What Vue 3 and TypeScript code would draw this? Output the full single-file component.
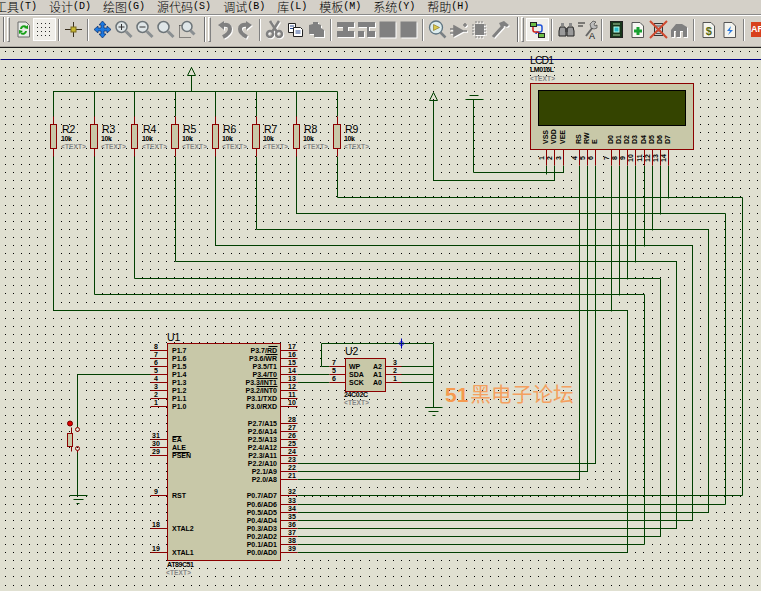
<script setup lang="ts">
interface Label { x: number; y: number; t: string; c: string; a?: string; r?: boolean; w?: number }

const menus = [
  ['工具', '(T)'], ['设计', '(D)'], ['绘图', '(G)'], ['源代码', '(S)'], ['调试', '(B)'],
  ['库', '(L)'], ['模板', '(M)'], ['系统', '(Y)'], ['帮助', '(H)'],
]

function dotPath(): string {
  let d = ''
  for (let k = 0; k <= 66; k++) {
    const y = Math.floor(51.4 + 8.085 * k)
    for (let i = 0; i <= 93; i++) {
      const x = Math.floor(5.2 + 8.085 * i)
      d += `M${x} ${y}h1v1h-1z`
    }
  }
  return d
}
const dots = dotPath()

const res = [
  { x: 53, bx: 50, w: 6, n: 'R2', lx: 62, row: 310, end: 627, to: 552 },
  { x: 94, bx: 90, w: 7, n: 'R3', lx: 102, row: 294, end: 644, to: 544 },
  { x: 134, bx: 131, w: 6, n: 'R4', lx: 143, row: 278, end: 660, to: 536 },
  { x: 175, bx: 171, w: 7, n: 'R5', lx: 183, row: 261, end: 676, to: 528 },
  { x: 215, bx: 212, w: 6, n: 'R6', lx: 223, row: 245, end: 692, to: 520 },
  { x: 256, bx: 252, w: 7, n: 'R7', lx: 264, row: 229, end: 708, to: 512 },
  { x: 296, bx: 293, w: 6, n: 'R8', lx: 304, row: 213, end: 725, to: 504 },
  { x: 337, bx: 333, w: 7, n: 'R9', lx: 345, row: 197, end: 742, to: 495 },
]

const lcdPins = [
  { x: 546, l: 'VSS', e: 174 }, { x: 554, l: 'VDD', e: 180 }, { x: 563, l: 'VEE', e: 172 },
  { x: 579, l: 'RS', e: 479 }, { x: 587, l: 'RW', e: 471 }, { x: 595, l: 'E', e: 463 },
  { x: 611, l: 'D0', e: 311 }, { x: 619, l: 'D1', e: 295 }, { x: 627, l: 'D2', e: 279 },
  { x: 635, l: 'D3', e: 262 }, { x: 644, l: 'D4', e: 246 }, { x: 652, l: 'D5', e: 230 },
  { x: 660, l: 'D6', e: 214 }, { x: 668, l: 'D7', e: 198 },
]

let wire = 'M53 91H337M191 91V75M563 172H473V99M554 180H433V100'
wire += 'M77 374H150M77 374V427M77 451V495M321 366H329M321 366V343H433V407M401 366H433M401 374H433M401 382H433M297 374H329M297 382H329'
for (const r of res) wire += `M${r.x} 91V116M${r.x} 156V${r.row}H${r.end}V${r.to}H297`
for (const p of lcdPins) wire += `M${p.x} 165V${p.e}`
wire += 'M579 479H297M587 471H297M595 463H297'

let redPins = ''
for (const r of res) redPins += `M${r.x} 116V124M${r.x} 148V156`
for (const p of lcdPins) redPins += `M${p.x} 149V165`

const labels: Label[] = []
res.forEach((r) => {
  labels.push({ x: r.lx, y: 133, t: r.n, c: 'ttl' })
  labels.push({ x: r.lx - 1, y: 141, t: '10k', c: 'pin', w: 11 })
  labels.push({ x: r.lx - 1, y: 149, t: '<TEXT>', c: 'grey', w: 25 })
})
lcdPins.forEach((p, i) => {
  labels.push({ x: p.x + 2, y: 144, t: p.l, c: 'pin', r: true })
  labels.push({ x: p.x - 2, y: 158, t: String(i + 1), c: 'pin', a: 'middle', r: true })
})
labels.push({ x: 530, y: 64, t: 'LCD1', c: 'ttl', w: 24 })
labels.push({ x: 530, y: 72, t: 'LM016L', c: 'pin', w: 24 })
labels.push({ x: 530, y: 81, t: '<TEXT>', c: 'grey', w: 25 })
labels.push({ x: 167, y: 341, t: 'U1', c: 'ttl' })
labels.push({ x: 167, y: 567, t: 'AT89C51', c: 'pin', w: 27 })
labels.push({ x: 166, y: 575, t: '<TEXT>', c: 'grey', w: 25 })
labels.push({ x: 345, y: 355, t: 'U2', c: 'ttl' })
labels.push({ x: 344, y: 397, t: '24C02C', c: 'pin', w: 24 })
labels.push({ x: 344, y: 405, t: '<TEXT>', c: 'grey', w: 25 })

const p1 = ['P1.7', 'P1.6', 'P1.5', 'P1.4', 'P1.3', 'P1.2', 'P1.1', 'P1.0']
const leftPins: [string, string, number][] = [
  ...p1.map((l, i): [string, string, number] => [l, String(8 - i), 350 + i * 8]),
  ['EA', '31', 439], ['ALE', '30', 447], ['PSEN', '29', 455], ['RST', '9', 495],
  ['XTAL2', '18', 528], ['XTAL1', '19', 552],
]
const ys0 = [495, 504, 512, 520, 528, 536, 544, 552]
const p3 = ['P3.7/RD', 'P3.6/WR', 'P3.5/T1', 'P3.4/T0', 'P3.3/INT1', 'P3.2/INT0', 'P3.1/TXD', 'P3.0/RXD']
const p2 = ['P2.7/A15', 'P2.6/A14', 'P2.5/A13', 'P2.4/A12', 'P2.3/A11', 'P2.2/A10', 'P2.1/A9', 'P2.0/A8']
const p0 = ['P0.7/AD7', 'P0.6/AD6', 'P0.5/AD5', 'P0.4/AD4', 'P0.3/AD3', 'P0.2/AD2', 'P0.1/AD1', 'P0.0/AD0']
const rightPins: [string, string, number][] = [
  ...p3.map((l, i): [string, string, number] => [l, String(17 - i), 350 + i * 8]),
  ...p2.map((l, i): [string, string, number] => [l, String(28 - i), 423 + i * 8]),
  ...p0.map((l, i): [string, string, number] => [l, String(32 + i), ys0[i]]),
]
for (const [l, n, y] of leftPins) {
  redPins += `M150 ${y}H167`
  labels.push({ x: 172, y: y + 2.5, t: l, c: 'pin' })
  labels.push({ x: 156, y: y - 1.5, t: n, c: 'pin', a: 'middle' })
}
for (const [l, n, y] of rightPins) {
  redPins += `M280 ${y}H297`
  labels.push({ x: 277, y: y + 2.5, t: l, c: 'pin', a: 'end' })
  labels.push({ x: 292, y: y - 1.5, t: n, c: 'pin', a: 'middle' })
}
const u2 = [
  { l: 'WP', n: '7', r: 'A2', m: '3', y: 366 },
  { l: 'SDA', n: '5', r: 'A1', m: '2', y: 374 },
  { l: 'SCK', n: '6', r: 'A0', m: '1', y: 382 },
]
for (const p of u2) {
  redPins += `M329 ${p.y}H345M385 ${p.y}H401`
  labels.push({ x: 349, y: p.y + 2.5, t: p.l, c: 'pin' })
  labels.push({ x: 382, y: p.y + 2.5, t: p.r, c: 'pin', a: 'end' })
  labels.push({ x: 334, y: p.y - 1.5, t: p.n, c: 'pin', a: 'middle' })
  labels.push({ x: 395, y: p.y - 1.5, t: p.m, c: 'pin', a: 'middle' })
}
const overbars = 'M268 346H277M265 354H277M256 378H277M256 386H277M172 436H181M172 452H189'
</script>

<template>
  <div class="app">
    <div class="menu">
      <span v-for="m in menus" :key="m[0]" class="mi"><span class="cjk">{{ m[0] }}</span><span class="key">{{ m[1] }}</span></span>
    </div>
    <div class="bar">
      <div class="grip g1"><i></i><b></b></div>
      <div class="cell"><svg viewBox="0 0 21 21"><path d="M5 3h8l3.500 3.500V18H5z" fill="#e9ece8" stroke="#6a6a6a"/><path d="M8 10a3 3 0 0 1 5-2M13 12a3 3 0 0 1-5 2" stroke="#18a018" stroke-width="2" fill="none"/><path d="M11 9l4-3v4zM10 12l-4 3v-4z" fill="#18a018"/></svg></div>
      <div class="cell on"><svg viewBox="0 0 21 21"><path d="M3 4.500H18M3 8.500H18M3 12.500H18M3 16.500H18" stroke="#2c2c2c" stroke-dasharray="1 3"/></svg></div>
      <div class="sep"></div>
      <div class="cell"><svg viewBox="0 0 21 21"><path d="M2 10.500H19M10.500 3V18" stroke="#3a3020"/><rect x="8" y="8" width="5" height="5" fill="#c8b830" stroke="#7a6a20"/></svg></div>
      <div class="sep"></div>
      <div class="cell"><svg viewBox="0 0 21 21"><path d="M10.500 2l3.500 4h-2v3h3V7l4 3.500-4 3.500v-2h-3v3h2l-3.500 4-3.500-4h2v-3H6v2l-4-3.500L6 7v2h3V6H7z" fill="#1c78e0" stroke="#0b2c66" stroke-width=".7"/></svg></div>
      <div class="cell"><svg viewBox="0 0 21 21"><circle cx="8.500" cy="8" r="5.500" fill="#dfe6e8" stroke="#6c7478" stroke-width="1.500"/><path d="M13 12.500l5.500 5.500" stroke="#8a8f92" stroke-width="3"/><path d="M5.500 8h6M8.500 5v6" stroke="#333"/></svg></div>
      <div class="cell"><svg viewBox="0 0 21 21"><circle cx="8.500" cy="8" r="5.500" fill="#dfe6e8" stroke="#6c7478" stroke-width="1.500"/><path d="M13 12.500l5.500 5.500" stroke="#8a8f92" stroke-width="3"/><path d="M5.500 8h6" stroke="#333"/></svg></div>
      <div class="cell"><svg viewBox="0 0 21 21"><circle cx="8.500" cy="8" r="5.500" fill="#dfe6e8" stroke="#6c7478" stroke-width="1.500"/><path d="M13 12.500l5.500 5.500" stroke="#8a8f92" stroke-width="3"/></svg></div>
      <div class="cell"><svg viewBox="0 0 21 21"><path d="M3.500 6.500V18.500H15" fill="none" stroke="#333" stroke-dasharray="1 1"/><path d="M3.500 6.500H7" stroke="#333" stroke-dasharray="1 1"/><circle cx="11" cy="7.500" r="5" fill="#dfe6e8" stroke="#6c7478" stroke-width="1.500"/><path d="M14.500 11.500l4 4" stroke="#8a8f92" stroke-width="3"/></svg></div>
      <div class="grip g2"><i></i><b></b></div>
      <div class="cell dim"><svg viewBox="0 0 21 21"><path d="M8 6c6-1 8 1 8 4s-3 6-7 8" stroke="#808080" stroke-width="4" fill="none"/><path d="M4 6l6-4v9z" fill="#808080"/></svg></div>
      <div class="cell dim"><svg viewBox="0 0 21 21"><path d="M13 6C7 5 5 7 5 10s3 6 7 8" stroke="#808080" stroke-width="4" fill="none"/><path d="M17 6l-6-4v9z" fill="#808080"/></svg></div>
      <div class="sep"></div>
      <div class="cell dim"><svg viewBox="0 0 21 21"><path d="M6 2l7 11M15 2L8 13" stroke="#808080" stroke-width="2.500"/><circle cx="6" cy="15" r="3" fill="none" stroke="#808080" stroke-width="2.500"/><circle cx="15" cy="15" r="3" fill="none" stroke="#808080" stroke-width="2.500"/></svg></div>
      <div class="cell"><svg viewBox="0 0 21 21"><path d="M3.500 4.500h7v9h-7z" fill="#fff" stroke="#222"/><path d="M8.500 8.500h7l2 2v7h-9z" fill="#fff" stroke="#222"/><path d="M5 7h4M5 9.500h3M10.500 12h5M10.500 14h5" stroke="#2a4a90"/></svg></div>
      <div class="cell dim"><svg viewBox="0 0 21 21"><path d="M3 6l4-1V3h5v2l3 1v3l3 2v7H8v-3H3z" fill="#808080"/></svg></div>
      <div class="sep"></div>
      <div class="cell dim"><svg viewBox="0 0 21 21"><path d="M2 3h17v5h-6v4h6v6H2v-6h6V8H2z" fill="#808080"/></svg></div>
      <div class="cell dim"><svg viewBox="0 0 21 21"><path d="M2 3h17v5h-6v4h6v6h-8V8H2z" fill="#808080"/><path d="M2 12h6v6H2z" fill="#808080"/></svg></div>
      <div class="cell dim"><svg viewBox="0 0 21 21"><rect x="2.500" y="2.500" width="16" height="16" fill="#808080"/></svg></div>
      <div class="cell dim"><svg viewBox="0 0 21 21"><rect x="2.500" y="2.500" width="16" height="16" fill="#808080"/></svg></div>
      <div class="sep"></div>
      <div class="cell"><svg viewBox="0 0 21 21"><circle cx="9" cy="8.500" r="6.500" fill="#dcecee" stroke="#5d7380" stroke-width="1.300"/><path d="M6.500 5.500l6 3-6 3z" fill="#d8c84c" stroke="#806a20" stroke-width=".6"/><path d="M13.500 13.500l5 5" stroke="#7a8084" stroke-width="2.500"/></svg></div>
      <div class="cell dim"><svg viewBox="0 0 21 21"><path d="M6 7l9 5-9 5zM2 10h4M2 14h4M15 12h4M15 6h4M17 4v4" stroke="#808080" stroke-width="1.600" fill="#808080"/></svg></div>
      <div class="cell dim"><svg viewBox="0 0 21 21"><path d="M6 5h9v11H6z" fill="#808080"/><path d="M3 6h15M3 9h15M3 12h15M3 15h15M7 2v17M10 2v17M13 2v17" stroke="#808080" stroke-dasharray="2 1"/></svg></div>
      <div class="cell dim"><svg viewBox="0 0 21 21"><path d="M3 18L13 7" stroke="#808080" stroke-width="3"/><path d="M9 4l5-2 5 4-2 2-3-1-2 3z" fill="#808080"/></svg></div>
      <div class="grip g3"><i></i><b></b></div>
      <div class="cell on"><svg viewBox="0 0 21 21"><path d="M9 6h4a2 2 0 0 1 2 2v3a2 2 0 0 1-2 2h-2a2 2 0 0 0-2 2" fill="none" stroke="#1c50d8" stroke-width="1.500"/><path d="M6 8v3a2 2 0 0 0 2 2h2a2 2 0 0 1 2 2" fill="none" stroke="#d02018" stroke-width="1.500"/><rect x="3.500" y="3.500" width="6" height="4" fill="#6cbe46" stroke="#222"/><rect x="11.500" y="14.500" width="6" height="4" fill="#6cbe46" stroke="#222"/></svg></div>
      <div class="sep"></div>
      <div class="cell"><svg viewBox="0 0 21 21"><path d="M5 4h3v3H5zM13 4h3v3h-3z" fill="#8a8a8a"/><path d="M4 8h5l1 4v5H3v-5zM12 8h5l1 4v5h-7v-5z" fill="#9a9a9a" stroke="#222"/><path d="M9 9h3v4H9z" fill="#444"/></svg></div>
      <div class="cell"><svg viewBox="0 0 21 21"><path d="M1 4h7M1 7h5" stroke="#222"/><path d="M9 17L16 8" stroke="#666" stroke-width="2"/><path d="M13 5l3-3 3 1-2 2 1 2 2-1v3l-3 1-3-1z" fill="#bbb" stroke="#333" stroke-width=".6"/><text x="12" y="20" class="ta">A</text></svg></div>
      <div class="sep"></div>
      <div class="cell"><svg viewBox="0 0 21 21"><rect x="4.500" y="2.500" width="12" height="16" fill="#18361c" stroke="#222"/><path d="M7 5h7M7 16h7" stroke="#a8d0a0"/><rect x="8" y="8" width="5" height="5" fill="#2ab8c8" stroke="#bfe"/></svg></div>
      <div class="cell"><svg viewBox="0 0 21 21"><path d="M5 3.500h8l3.500 3.500v11.500H5z" fill="#f7f7f3" stroke="#555"/><path d="M7 12h8M11 8v8" stroke="#18a030" stroke-width="3"/></svg></div>
      <div class="cell"><svg viewBox="0 0 21 21"><rect x="6.500" y="4.500" width="8" height="12" fill="#ccc" stroke="#333"/><path d="M8 7h5M8 9.500h5M8 12h5M8 14.500h5" stroke="#555"/><path d="M2 2l17 17M19 2L2 19" stroke="#d04a30" stroke-width="2"/></svg></div>
      <div class="cell dim"><svg viewBox="0 0 21 21"><path d="M2 18v-7l5-6h6l5 3v10h-4v-6h-3v6H7v-6H5v6z" fill="#808080"/></svg></div>
      <div class="sep"></div>
      <div class="cell"><svg viewBox="0 0 21 21"><path d="M5 3.500h8l3.500 3.500v11.500H5z" fill="#f4f4ee" stroke="#555"/><text x="10.800" y="15.500" text-anchor="middle" class="ts dollar">$</text></svg></div>
      <div class="cell"><svg viewBox="0 0 21 21"><path d="M5 3.500h8l3.500 3.500v11.500H5z" fill="#f4f4ee" stroke="#555"/><path d="M12 7l-4 5h3l-2 4 5-5h-3z" fill="#2878e0"/></svg></div>
      <div class="sep"></div>
      <div class="cell ares"><span>ARE</span></div>
    </div>
    <svg class="sheet" viewBox="0 48 761 543" width="761" height="543">
      <path :d="dots" fill="#000" />
      <g transform="translate(.5 .5)" fill="none" stroke-width="1">
        <path d="M0 59H761" stroke="#000080" />
        <path :d="wire" stroke="#004000" />
        <path :d="redPins" stroke="#8b0000" />
        <path d="M191 67l-4 8h8z" stroke="#004000" />
        <path d="M433 92l-4 8h8z" stroke="#004000" />
        <path d="M465 99H483M469 95H478" stroke="#004000" />
        <path d="M425 407H442M428 411H438M432 415H435" stroke="#004000" />
        <path d="M69 495H87M73 499H83M76 503H79" stroke="#004000" />
        <rect v-for="r in res" :key="r.n" :x="r.bx" y="124" :width="r.w" height="24" fill="#c8c8a8" stroke="#8b0000" />
        <rect x="530" y="83" width="163" height="66" fill="#c8c8a8" stroke="#8b0000" />
        <rect x="538" y="90" width="147" height="35" fill="#344400" stroke="#000" />
        <rect x="167" y="343" width="113" height="217" fill="#c8c8a8" stroke="#8b0000" />
        <rect x="345" y="358" width="40" height="33" fill="#c8c8a8" stroke="#8b0000" />
        <path :d="overbars" stroke="#000" />
        <circle cx="77" cy="429" r="2" stroke="#8b0000" />
        <circle cx="77" cy="448" r="2" stroke="#8b0000" />
        <path d="M71 427V451M77 450V452" stroke="#8b0000" />
        <rect x="67" y="433" width="5" height="13" fill="#c8c8a8" stroke="#8b0000" />
        <circle cx="69.500" cy="423" r="2.500" fill="#e00000" stroke="#700000" />
        <path d="M401 338V348M401 340.500l2.500 2.500-2.500 2.500-2.500-2.500z" stroke="#0000c0" />
      </g>
      <template v-for="(l, i) in labels" :key="i">
        <text
          :x="l.x"
          :y="l.y"
          :class="l.c"
          :text-anchor="l.a || 'start'"
          :textLength="l.w"
          :transform="l.r ? `rotate(-90 ${l.x} ${l.y})` : undefined"
        >{{ l.t }}</text>
      </template>
      <text x="445" y="402" class="wm"><tspan class="wm51">51</tspan><tspan dx="2">黑电子论坛</tspan></text>
    </svg>
  </div>
</template>

<style scoped>
.app {
  width: 761px;
  height: 591px;
  overflow: hidden;
  background: #d4d0c8;
  display: flex;
  flex-direction: column;
}
.menu {
  height: 14px;
  flex: none;
  display: flex;
  gap: 12px;
  margin-left: -5px;
  border-bottom: 1px solid #8a8a8a;
  box-shadow: 0 1px 0 #fff;
  line-height: 13px;
  color: #000;
  white-space: nowrap;
}
.mi { display: flex; }
.cjk { font: 300 12px/13px "Noto Sans CJK SC", sans-serif; }
.key { font: 10px/13px "Liberation Mono", monospace; }
.bar {
  height: 31px;
  margin-top: 1px;
  flex: none;
  display: flex;
  align-items: center;
  padding-bottom: 3px;
  box-sizing: border-box;
  border-bottom: 1px solid #b0aca4;
}
.cell {
  width: 21px;
  height: 21px;
  flex: none;
}
.cell svg { display: block; width: 21px; height: 21px; }
.cell.on {
  background: #f0eee9;
  box-shadow: 0 0 0 1px #fff;
}
.dim svg { filter: drop-shadow(1px 1px 0 #fff); }
.sep { width: 8px; height: 22px; flex: none; position: relative; }
.sep::before {
  content: "";
  display: block;
  width: 1px;
  height: 22px;
  margin-left: 3px;
  background: #808080;
  box-shadow: 1px 0 0 #fff;
}
.grip { display: flex; flex: none; height: 25px; }
.grip i { width: 1px; background: #707070; box-shadow: 1px 0 0 #fff; }
.grip b { width: 1px; margin-left: 3px; border: 1px solid #808080; border-left-color: #fff; border-top-color: #fff; }
.g1 { width: 13px; padding-left: 3px; box-sizing: border-box; }
.g2 { width: 17px; padding-left: 7px; box-sizing: border-box; }
.g3 { width: 16px; padding-left: 6px; box-sizing: border-box; }
.ares span {
  display: block;
  margin-left: 3px;
  width: 20px;
  height: 15px;
  margin-top: 3px;
  background: #d8401c;
  color: #fff;
  font: bold 9px/15px "Liberation Sans", sans-serif;
}
.ta { font: 9px "Liberation Sans", sans-serif; fill: #111; }
.ts { font: bold 11px "Liberation Sans", sans-serif; }
.dollar { fill: #5a6a10; }
.sheet {
  display: block;
  flex: none;
  background: #e0e0d1;
  border-top: 1px solid #1c1c1c;
}
.ttl { font: 10.500px "Liberation Sans", sans-serif; fill: #000; }
.pin { font: bold 7px "Liberation Sans", sans-serif; fill: #000; }
.grey { font: bold 6.500px "Liberation Sans", sans-serif; fill: #858585; }
.wm { font: 20.700px "Noto Sans CJK SC", sans-serif; fill: #f4a060; }
.wm51 { font: bold 21px "Liberation Sans", sans-serif; fill: #f59a50; }
</style>

<style>
html, body { background: #d4d0c8; }
</style>
